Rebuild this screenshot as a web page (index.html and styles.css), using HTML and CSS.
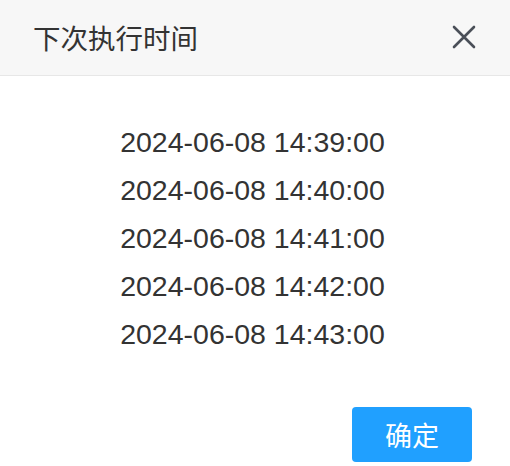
FILE: index.html
```html
<!DOCTYPE html>
<html lang="zh-CN">
<head>
  <meta charset="UTF-8" />
  <meta name="viewport" content="width=device-width, initial-scale=1.0"/>
  <title>下次执行时间</title>
  <link rel="stylesheet" href="styles.css">
</head>
<body>
  <div class="dialog">
    <div class="dialog-header">
      <span class="dialog-title">下次执行时间</span>
      <button class="close-btn" aria-label="关闭">
        <svg width="24" height="24" viewBox="0 0 24 24">
          <path d="M2 2 L22 22 M22 2 L2 22" stroke="#4a4f58" stroke-width="2.6" stroke-linecap="round" fill="none"/>
        </svg>
      </button>
    </div>
    <div class="dialog-body">
      <div class="time-row">2024-06-08 14:39:00</div>
      <div class="time-row">2024-06-08 14:40:00</div>
      <div class="time-row">2024-06-08 14:41:00</div>
      <div class="time-row">2024-06-08 14:42:00</div>
      <div class="time-row">2024-06-08 14:43:00</div>
    </div>
    <div class="dialog-footer">
      <button class="ok-btn">确定</button>
    </div>
  </div>
</body>
</html>
```

FILE: styles.css
```css
body {
  margin: 0;
  background: #fff;
  font-family: 'Liberation Sans', Arial, 'Noto Sans CJK SC', sans-serif;
  color: #333;
}
.dialog {
  width: 510px;
}
.dialog-header {
  height: 75px;
  background: #f7f7f7;
  border-bottom: 1px solid #e7e7e7;
  display: flex;
  align-items: center;
  justify-content: space-between;
  padding: 0 34px 0 33px;
}
.dialog-title {
  font-size: 27.5px;
  color: #333;
  margin-top: -2px;
}
.close-btn {
  background: none;
  border: none;
  padding: 0;
  width: 24px;
  height: 24px;
  cursor: pointer;
  display: flex;
  margin-top: -1px;
}
.dialog-body {
  padding: 42px 5px 0 0;
  text-align: center;
}
.time-row {
  font-size: 28.5px;
  line-height: 48px;
  color: #333;
}
.dialog-footer {
  display: flex;
  justify-content: flex-end;
  padding: 49px 38px 4px 0;
}
.ok-btn {
  width: 120px;
  height: 55px;
  background: #20a0ff;
  color: #fff;
  border: none;
  border-radius: 4px;
  font-family: 'Noto Sans CJK SC', sans-serif;
  font-size: 27px;
  cursor: pointer;
}
```
